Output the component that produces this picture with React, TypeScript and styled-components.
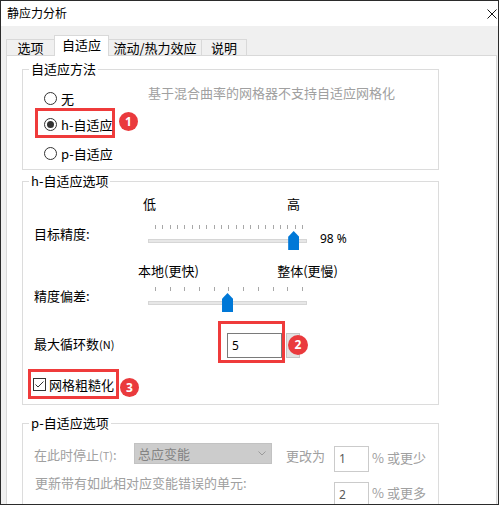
import React from 'react';
import styled, { createGlobalStyle } from 'styled-components';

const GlobalStyle = createGlobalStyle`
  html, body {
    margin: 0;
    padding: 0;
    background: #fff;
  }
  body {
    font-family: "Noto Sans CJK SC", "Noto Sans", sans-serif;
    font-size: 13px;
    color: #000;
  }
  * {
    box-sizing: border-box;
  }
`;

const Window = styled.div`
  width: 499px;
  height: 505px;
  border: 1px solid #2b2b2b;
  display: flex;
  flex-direction: column;
  overflow: hidden;
  background: #f0f0f0;
`;

const TitleBar = styled.div`
  height: 25px;
  flex: none;
  background: #fff;
  display: flex;
  align-items: center;
  justify-content: space-between;
  padding: 0 1px 2px 6px;
  font-size: 12px;
  line-height: 17px;
`;

const CloseIcon = styled.svg`
  width: 10px;
  height: 10px;
  margin-top: 2px;
`;

const TabBar = styled.div`
  height: 29px;
  flex: none;
  display: flex;
  align-items: flex-end;
  padding-left: 5px;
`;

const Tab = styled.div<{ $active?: boolean; $w: number }>`
  width: ${(p) => p.$w}px;
  height: ${(p) => (p.$active ? 21 : 16)}px;
  margin-bottom: ${(p) => (p.$active ? -1 : 0)}px;
  border: 1px solid #d9d9d9;
  border-bottom: none;
  background: ${(p) => (p.$active ? '#fff' : '#f0f0f0')};
  position: relative;
  z-index: ${(p) => (p.$active ? 1 : 0)};
  display: flex;
  align-items: center;
  justify-content: center;
  font-size: 13px;
  line-height: 16px;
  padding-bottom: ${(p) => (p.$active ? 3 : 0)}px;
  white-space: nowrap;

  & + & {
    margin-left: -1px;
  }
`;

const Panel = styled.div`
  flex: 1;
  margin: 0 1px 0 5px;
  background: #fff;
  border: 1px solid #d9d9d9;
  padding: 5px 0 0 15px;
`;

const Group = styled.fieldset<{ $mt?: number; $pb?: number }>`
  width: 417px;
  margin: ${(p) => p.$mt ?? 0}px 0 0 0;
  border: 1px solid #dcdcdc;
  padding: 0 10px ${(p) => p.$pb ?? 6}px 11px;
  min-inline-size: 0;
`;

const Legend = styled.legend`
  font-size: 13px;
  line-height: 16px;
  padding: 0 2px;
  margin-left: -5px;
`;

/* ---------- 自适应方法 ---------- */

const MethodBody = styled.div`
  display: flex;
  padding-top: 11px;
`;

const RadioColumn = styled.div`
  width: 114px;
  flex: none;
  padding-left: 10px;
  display: flex;
  flex-direction: column;
  align-items: flex-start;
`;

const RadioRow = styled.div<{ $mt?: number }>`
  height: 20px;
  display: flex;
  align-items: center;
  gap: 4px;
  margin-top: ${(p) => p.$mt ?? 0}px;
  line-height: 17px;
  white-space: nowrap;
`;

const RadioDot = styled.span<{ $on?: boolean }>`
  width: 13px;
  height: 13px;
  flex: none;
  border-radius: 50%;
  border: 1px solid #333;
  background: #fff;
  display: flex;
  align-items: center;
  justify-content: center;

  &::after {
    content: '';
    width: 7px;
    height: 7px;
    border-radius: 50%;
    background: #333;
    display: ${(p) => (p.$on ? 'block' : 'none')};
  }
`;

const Note = styled.div`
  color: #a0a0a0;
  line-height: 17px;
  margin-top: -4px;
  white-space: nowrap;
`;

/* ---------- annotations ---------- */

const Mark = styled.div<{ $pad: string; $ml?: number; $mt?: number }>`
  position: relative;
  flex: none;
  border: 3px solid #ef3b3b;
  padding: ${(p) => p.$pad};
  margin-left: ${(p) => p.$ml ?? 0}px;
  margin-top: ${(p) => p.$mt ?? 0}px;
  align-self: flex-start;
`;

const Badge = styled.span<{ $left: number; $top: number; $size?: number }>`
  position: absolute;
  left: ${(p) => p.$left}px;
  top: ${(p) => p.$top}px;
  width: ${(p) => p.$size ?? 19}px;
  height: ${(p) => p.$size ?? 19}px;
  border-radius: 50%;
  background: #ea3a3d;
  color: #fff;
  font: bold 12px / ${(p) => p.$size ?? 19}px "Noto Sans", sans-serif;
  text-align: center;
  z-index: 2;
`;

/* ---------- h-自适应选项 ---------- */

const HBody = styled.div`
  padding-top: 6px;
  display: flex;
  flex-direction: column;
`;

const Captions = styled.div<{ $ml: number; $w: number; $mt?: number; $mb?: number }>`
  display: flex;
  justify-content: space-between;
  margin: ${(p) => p.$mt ?? 0}px 0 ${(p) => p.$mb ?? 0}px ${(p) => p.$ml}px;
  width: ${(p) => p.$w}px;
  line-height: 17px;
  white-space: nowrap;
`;

const SliderRow = styled.div`
  display: grid;
  grid-template-columns: 114px 159px auto;
  align-items: start;
`;

const FieldLabel = styled.div<{ $mt?: number }>`
  line-height: 17px;
  margin-top: ${(p) => p.$mt ?? 0}px;
  white-space: nowrap;
`;

const Small = styled.span`
  font-size: 11px;
`;

const SliderBox = styled.div`
  position: relative;
  height: 25px;
`;

const Ticks = styled.div`
  height: 5px;
  margin: 0 4px 0 7px;
  display: flex;
  justify-content: space-between;
`;

const Tick = styled.span`
  width: 1px;
  height: 4px;
  background: #a8a8a8;
`;

const Track = styled.div`
  margin-top: 9px;
  height: 4px;
  background: #e7e7e7;
  border: 1px solid #d6d6d6;
`;

const Thumb = styled.div`
  position: absolute;
  top: 6px;
  width: 11px;
  height: 19px;
  background: #0078d7;
  clip-path: polygon(50% 0, 100% 30%, 100% 100%, 0 100%, 0 30%);
`;

const Value = styled.div`
  margin: 5px 0 0 13px;
  font: 12px/17px "Noto Sans", sans-serif;
`;

const LoopRow = styled.div`
  display: flex;
  align-items: flex-start;
  margin-top: 9px;
`;

const TextBox = styled.div<{ $w: number; $h: number; $muted?: boolean }>`
  width: ${(p) => p.$w}px;
  height: ${(p) => p.$h}px;
  border: 1px solid ${(p) => (p.$muted ? '#cbcbcb' : '#7a7a7a')};
  background: #fff;
  color: ${(p) => (p.$muted ? '#5a5a5a' : '#000')};
  font: 12px/17px "Noto Sans", sans-serif;
  padding: 3px 0 0 4px;
`;

const Spin = styled.div`
  width: 14px;
  height: 25px;
  margin: 12px 0 0 1px;
  background: #e3e3e3;
  border: 1px solid #c4c4c4;
`;

const CheckRow = styled.div`
  height: 20px;
  display: flex;
  align-items: center;
  gap: 3px;
  line-height: 17px;
  white-space: nowrap;
`;

const CheckBox = styled.svg`
  width: 13px;
  height: 13px;
  flex: none;
`;

/* ---------- p-自适应选项 ---------- */

const PGrid = styled.div`
  display: grid;
  grid-template-columns: 300px 35px auto;
  row-gap: 10px;
  align-items: start;
  padding-top: 12px;
  color: #a0a0a0;
`;

const PLead = styled.div`
  display: flex;
  align-items: flex-start;
`;

const Muted = styled.div<{ $w?: number; $mt?: number; $ml?: number }>`
  width: ${(p) => (p.$w ? `${p.$w}px` : 'auto')};
  margin-top: ${(p) => p.$mt ?? 0}px;
  margin-left: ${(p) => p.$ml ?? 0}px;
  line-height: 17px;
  white-space: nowrap;
  color: #a0a0a0;
`;

const Select = styled.div`
  width: 138px;
  height: 21px;
  flex: none;
  background: #cccccc;
  border: 1px solid #c2c2c2;
  display: flex;
  align-items: center;
  justify-content: space-between;
  padding: 0 5px 1px 3px;
  color: #838383;
  line-height: 17px;
`;

const Chevron = styled.svg`
  width: 8px;
  height: 5px;
`;

const tabs = [
  { label: '选项', w: 49 },
  { label: '自适应', w: 55, active: true },
  { label: '流动/热力效应', w: 94 },
  { label: '说明', w: 46 },
];

function Slider({ ticks, pos }: { ticks: number; pos: number }) {
  // ticks run from x=7 to x=154 inside the 159px box
  const left = 7 + pos * 147 - 5;
  return (
    <SliderBox>
      <Ticks>
        {Array.from({ length: ticks }, (_, i) => (
          <Tick key={i} />
        ))}
      </Ticks>
      <Track />
      <Thumb style={{ left }} />
    </SliderBox>
  );
}

export default function App() {
  return (
    <>
      <GlobalStyle />
      <Window>
        <TitleBar>
          <span>静应力分析</span>
          <CloseIcon viewBox="0 0 10 10">
            <path d="M0.5 0.5 L9.5 9.5 M9.5 0.5 L0.5 9.5" stroke="#111" strokeWidth="1" />
          </CloseIcon>
        </TitleBar>

        <TabBar>
          {tabs.map((t) => (
            <Tab key={t.label} $w={t.w} $active={t.active}>
              {t.label}
            </Tab>
          ))}
        </TabBar>

        <Panel>
          <Group $pb={6}>
            <Legend>自适应方法</Legend>
            <MethodBody>
              <RadioColumn>
                <RadioRow>
                  <RadioDot />
                  无
                </RadioRow>
                <Mark $pad="3px 0 1px 6px" $ml={-9}>
                  <RadioRow>
                    <RadioDot $on />
                    h-自适应
                  </RadioRow>
                  <Badge $left={81} $top={1}>1</Badge>
                </Mark>
                <RadioRow $mt={5}>
                  <RadioDot />
                  p-自适应
                </RadioRow>
              </RadioColumn>
              <Note>基于混合曲率的网格器不支持自适应网格化</Note>
            </MethodBody>
          </Group>

          <Group $mt={3} $pb={5}>
            <Legend>h-自适应选项</Legend>
            <HBody>
              <Captions $ml={109} $w={157} $mb={13}>
                <span>低</span>
                <span>高</span>
              </Captions>
              <SliderRow>
                <FieldLabel>目标精度:</FieldLabel>
                <Slider ticks={21} pos={0.94} />
                <Value>98 %</Value>
              </SliderRow>

              <Captions $ml={104} $w={200} $mt={12} $mb={8}>
                <span>本地(更快)</span>
                <span>整体(更慢)</span>
              </Captions>
              <SliderRow>
                <FieldLabel>精度偏差:</FieldLabel>
                <Slider ticks={11} pos={0.49} />
              </SliderRow>

              <LoopRow>
                <FieldLabel $mt={14} style={{ width: 184 }}>
                  最大循环数<Small>(N)</Small>
                </FieldLabel>
                <Mark $pad="9px 0 2px 6px">
                  <TextBox $w={55} $h={25}>5</TextBox>
                  <Badge $left={67} $top={11} $size={20}>2</Badge>
                </Mark>
                <Spin />
              </LoopRow>

              <Mark $pad="2px 2px 2px 2px" $ml={-6} $mt={6}>
                <CheckRow>
                  <CheckBox viewBox="0 0 13 13">
                    <rect x="0.5" y="0.5" width="12" height="12" fill="#fff" stroke="#333" />
                    <path d="M2.5 6.5 L5 9 L10.5 3.5" fill="none" stroke="#333" strokeWidth="1" />
                  </CheckBox>
                  网格粗糙化
                </CheckRow>
                <Badge $left={89} $top={6}>3</Badge>
              </Mark>
            </HBody>
          </Group>

          <Group $mt={10} $pb={20}>
            <Legend>p-自适应选项</Legend>
            <PGrid>
              <PLead>
                <Muted $w={100} $mt={3}>
                  在此时停止<Small>(T)</Small>:
                </Muted>
                <Select>
                  <span>总应变能</span>
                  <Chevron viewBox="0 0 8 5">
                    <path d="M0.5 0.5 L4 4 L7.5 0.5" fill="none" stroke="#9a9a9a" strokeWidth="1" />
                  </Chevron>
                </Select>
                <Muted $ml={14} $mt={4}>更改为</Muted>
              </PLead>
              <TextBox $w={35} $h={26} $muted style={{ marginTop: 3 }}>1</TextBox>
              <Muted $ml={3} $mt={6}>% 或更少</Muted>

              <Muted $ml={1} $mt={-8}>更新带有如此相对应变能错误的单元:</Muted>
              <TextBox $w={35} $h={26} $muted>2</TextBox>
              <Muted $ml={3} $mt={2}>% 或更多</Muted>
            </PGrid>
          </Group>
        </Panel>
      </Window>
    </>
  );
}
